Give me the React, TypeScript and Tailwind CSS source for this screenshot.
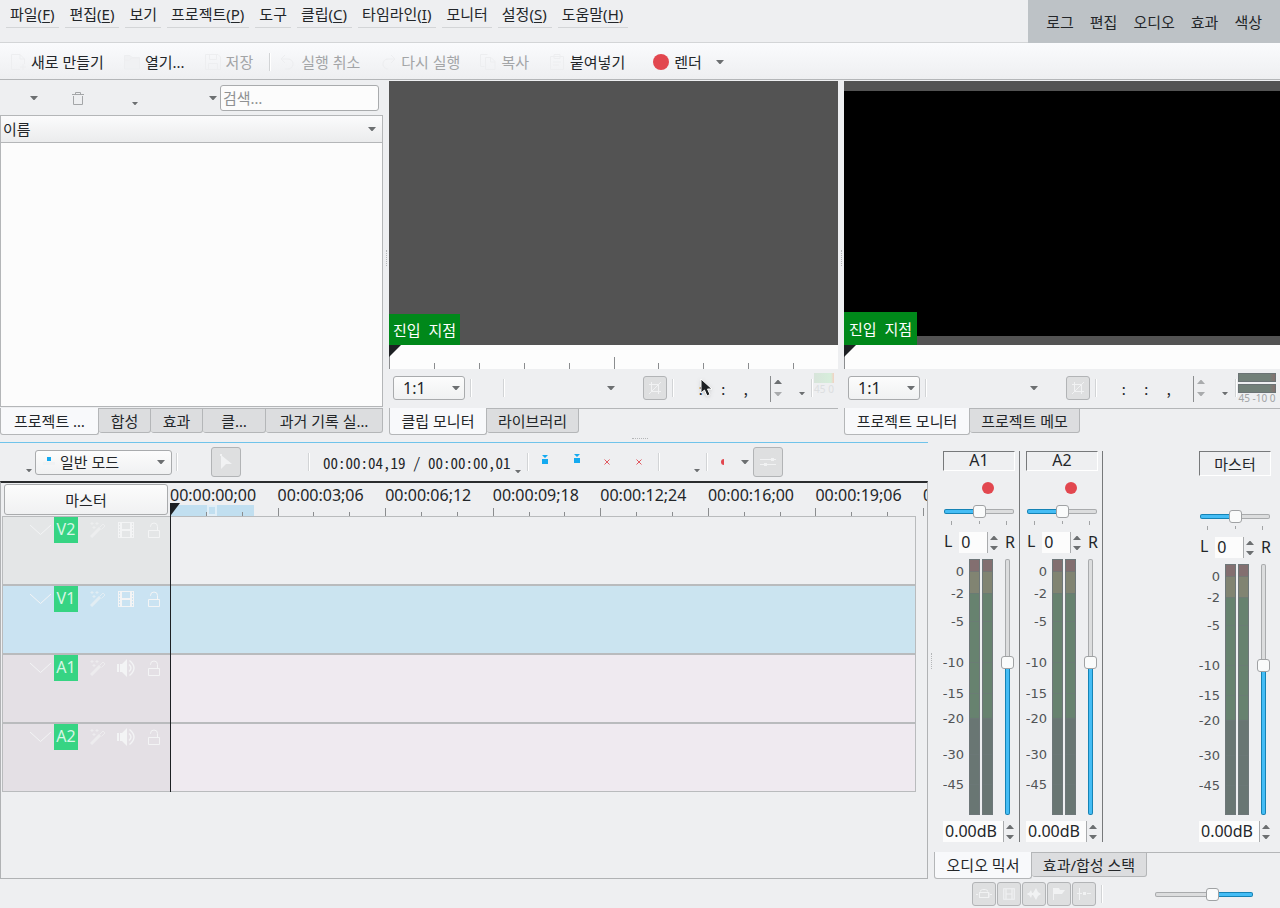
import React, { useState } from 'react'
import clsx from 'clsx'

const MENUS = [
  { label: '파일', hotkey: 'F' },
  { label: '편집', hotkey: 'E' },
  { label: '보기' },
  { label: '프로젝트', hotkey: 'P' },
  { label: '도구' },
  { label: '클립', hotkey: 'C' },
  { label: '타임라인', hotkey: 'I' },
  { label: '모니터' },
  { label: '설정', hotkey: 'S' },
  { label: '도움말', hotkey: 'H' },
]

const WORKSPACES = ['로그', '편집', '오디오', '효과', '색상']

const TIMECODES = [
  '00:00:00;00',
  '00:00:03;06',
  '00:00:06;12',
  '00:00:09;18',
  '00:00:12;24',
  '00:00:16;00',
  '00:00:19;06',
]

const TRACKS = [
  { name: 'V2', head: 'bg-[#e4e6e7]', body: 'bg-[#eeeff1]', audio: false },
  { name: 'V1', head: 'bg-[#cae3f2]', body: 'bg-[#cbe4f0]', audio: false },
  { name: 'A1', head: 'bg-[#e4e0e5]', body: 'bg-[#efeaf0]', audio: true },
  { name: 'A2', head: 'bg-[#e4e0e5]', body: 'bg-[#efeaf0]', audio: true },
]

// dB mark -> position on the meter, 0 is the top
const SCALE = [
  { db: '0', pos: 0.047 },
  { db: '-2', pos: 0.133 },
  { db: '-5', pos: 0.243 },
  { db: '-10', pos: 0.402 },
  { db: '-15', pos: 0.523 },
  { db: '-20', pos: 0.621 },
  { db: '-30', pos: 0.762 },
  { db: '-45', pos: 0.879 },
]

const MONO = 'font-["Noto_Sans_Mono_CJK_KR","Noto_Sans_Mono","Liberation_Mono",monospace]'

const THUMB =
  '[&::-webkit-slider-thumb]:h-[13px] [&::-webkit-slider-thumb]:w-[13px] [&::-webkit-slider-thumb]:appearance-none [&::-webkit-slider-thumb]:rounded-[3px] [&::-webkit-slider-thumb]:border [&::-webkit-slider-thumb]:border-[#a0a2a4] [&::-webkit-slider-thumb]:bg-[#fafbfb]'

const H_SLIDER =
  'h-4 w-full appearance-none bg-transparent [&::-webkit-slider-runnable-track]:h-[5px] [&::-webkit-slider-runnable-track]:rounded-[2px] [&::-webkit-slider-runnable-track]:border [&::-webkit-slider-runnable-track]:border-transparent [&::-webkit-slider-thumb]:-mt-[5px]'

const V_SLIDER =
  'w-[13px] shrink-0 appearance-none bg-transparent [direction:rtl] [writing-mode:vertical-lr] [&::-webkit-slider-runnable-track]:h-full [&::-webkit-slider-runnable-track]:w-[5px] [&::-webkit-slider-runnable-track]:rounded-[2px] [&::-webkit-slider-runnable-track]:border [&::-webkit-slider-runnable-track]:border-transparent [&::-webkit-slider-thumb]:-ml-[5px]'

function Caret({ small, up, light }: { small?: boolean; up?: boolean; light?: boolean }) {
  return (
    <svg
      width={small ? 6 : 8}
      height={small ? 3 : 4}
      viewBox="0 0 8 4"
      className={clsx('shrink-0', up && 'rotate-180', light ? 'fill-[#a9abad]' : 'fill-[#6c6f71]')}
    >
      <path d="M0 0h8L4.500 4h-1z" />
    </svg>
  )
}

function Sep({ className }: { className?: string }) {
  return <span className={clsx('h-[18px] w-[2px] shrink-0 border-l border-[#d2d4d6] bg-white', className)} />
}

function Grip({ vertical }: { vertical?: boolean }) {
  return (
    <span
      className={clsx(
        'border-dotted border-[#b4b6b8]',
        vertical ? 'h-4 w-px border-l' : 'h-px w-4 border-t'
      )}
    />
  )
}

function FilmIcon() {
  return (
    <svg width="16" height="16" viewBox="0 0 16 16" fill="currentColor">
      <path
        fillRule="evenodd"
        d="M0 0h16v16H0zM4 1h8v6H4zM4 9h8v6H4zM1 1h1v2H1zM1 4h1v2H1zM1 7h1v2H1zM1 10h1v2H1zM1 13h1v2H1zM14 1h1v2h-1zM14 4h1v2h-1zM14 7h1v2h-1zM14 10h1v2h-1zM14 13h1v2h-1z"
      />
    </svg>
  )
}

function SpeakerIcon() {
  return (
    <svg width="18" height="18" viewBox="0 0 18 18" fill="none" stroke="currentColor">
      <path d="M0 5h2v8H0zM3 5h2l5-5v18l-5-5H3z" fill="currentColor" stroke="none" />
      <path d="M12 5.500q4 3.500 0 7M12.500 1.500q9 7.500 0 15" strokeWidth="1.400" />
    </svg>
  )
}

function LockIcon() {
  return (
    <svg width="12" height="16" viewBox="0 0 12 16" fill="none" stroke="currentColor">
      <path d="M.5 8.500h11v7H.5zM9.500 8V4.500a3.500 3.500 0 0 0-7 0V5" />
    </svg>
  )
}

function WandIcon() {
  return (
    <svg width="16" height="16" viewBox="0 0 16 16" fill="none" stroke="currentColor">
      <path d="M1 15L10 6" strokeWidth="3" />
      <path d="M9.500 5.500L13 2l2 2-3.500 3.500M2 0v3M.5 1.500h3M7 0v3M5.500 1.500h3M4 4v3M2.500 5.500h3" />
    </svg>
  )
}

function ToolIcon({ name }: { name: string }) {
  if (name === 'render') {
    return (
      <svg width="16" height="16" viewBox="0 0 16 16" fill="#e2474f">
        <circle cx="8" cy="8" r="8" />
      </svg>
    )
  }
  return (
    <svg width="16" height="16" viewBox="0 0 16 16" fill="none" stroke="#edeef0">
      {name === 'new' && <path d="M14.500 10V5L10 .5H1.500v15H10M10 .5V5h4.500M13 10v6M10 13h6" />}
      {name === 'open' && <path d="M.5 15V1.500H6l2 2h7.500V15zM.5 6h5l2-2h8" fill="#f0f1f3" />}
      {name === 'save' && <path d="M.5.5H13l2.500 2.500v12.500H.5zM4.500.5v5h7v-5M3.500 15V9.500h9V15" />}
      {name === 'undo' && <path d="M5 1L1 5l4 4M1 5h7a5 5 0 0 1 0 10H5" />}
      {name === 'redo' && <path d="M11 1l4 4-4 4M15 5H8a5 5 0 0 0 0 10" />}
      {name === 'copy' && <path d="M4.500 12.500h-4V.5h7M5.500 3.500H11l4 4v8H5.500zM10.500 3.500V8H15" />}
      {name === 'paste' && <path d="M1.500 2.500h13v13h-13zM5 .5h6v4H5zM4 8h8M4 11h6" />}
    </svg>
  )
}

function ToolAction({ icon, label, disabled }: { icon: string; label: string; disabled?: boolean }) {
  return (
    <button className="flex items-center gap-[5px] whitespace-nowrap disabled:text-[#a3a5a7]" disabled={disabled}>
      <ToolIcon name={icon} />
      {label}
    </button>
  )
}

function PressedButton({ label, className, children }: { label: string; className: string; children: React.ReactNode }) {
  return (
    <button
      aria-label={label}
      className={clsx(
        'flex shrink-0 items-center justify-center rounded-[3px] border border-[#b2b4b6] bg-[#dedfe0] text-[#f1f2f3]',
        className
      )}
    >
      {children}
    </button>
  )
}

function Tabs({ items, widths }: { items: string[]; widths: string[] }) {
  const [active, setActive] = useState(0)

  return (
    <div role="tablist" className="flex h-[27px] items-start">
      {items.map((item, i) => (
        <button
          key={item}
          role="tab"
          aria-selected={i === active}
          onClick={() => setActive(i)}
          className={clsx(
            'shrink-0 whitespace-nowrap rounded-b-[3px] border border-[#b4b6b8]',
            widths[i],
            i === active ? 'h-[27px] border-t-0 bg-[#f8f9fb]' : 'h-[25px] border-l-0 bg-[#dcdddf]'
          )}
        >
          {item}
        </button>
      ))}
      <span className="flex-1 border-t border-[#b4b6b8]" />
    </div>
  )
}

function ProjectBin() {
  return (
    <section className="flex min-w-0 flex-[383] flex-col">
      <div className="flex h-[34px] items-center pr-1">
        <button aria-label="클립 추가" className="ml-[30px]">
          <Caret />
        </button>
        <button aria-label="삭제" className="ml-[34px]">
          <svg width="12" height="13" viewBox="0 0 12 13" fill="none" stroke="#a4a6a8">
            <path d="M0 2.500h12M3.500 2V.5h5V2M1.500 4v8.500h9V4" />
          </svg>
        </button>
        <button aria-label="보기 옵션" className="ml-12 self-end pb-[10px]">
          <Caret small />
        </button>
        <button aria-label="필터" className="ml-auto mr-[3px]">
          <Caret />
        </button>
        <input
          aria-label="검색"
          placeholder="검색…"
          className="h-[26px] w-[159px] rounded-[3px] border border-[#a9abad] bg-[#fcfcfc] px-[2px] placeholder:text-[#8f9193]"
        />
      </div>
      <div className="mb-px h-[292px] border border-[#b4b6b8] bg-[#fcfcfc]">
        <button className="flex h-[27px] w-full items-center justify-between border-b border-[#b4b6b8] bg-linear-to-b from-[#fbfbfc] to-[#ebeced] pl-[2px] pr-[6px]">
          이름
          <Caret />
        </button>
      </div>
      <Tabs
        items={['프로젝트 …', '합성', '효과', '클…', '과거 기록 실…']}
        widths={['w-[99px]', 'w-[52px]', 'w-[52px]', 'w-[63px]', 'w-[117px]']}
      />
    </section>
  )
}

function CropIcon() {
  return (
    <svg width="12" height="12" viewBox="0 0 12 12" fill="none" stroke="currentColor">
      <path d="M2.500 0v9.500H12M0 2.500h9.500V12M0 12L12 0" />
    </svg>
  )
}

function MonitorBar({ project }: { project?: boolean }) {
  return (
    <div className="flex h-[39px] items-center pb-[2px]">
      <label className="relative ml-1 shrink-0">
        <select
          aria-label="확대 비율"
          className="h-[24px] w-[72px] appearance-none rounded-[3px] border border-[#a9abad] bg-linear-to-b from-[#fcfcfc] to-[#f0f1f2] pl-[9px] text-base leading-5"
        >
          <option>1:1</option>
        </select>
        <span className="pointer-events-none absolute right-[5px] top-[10px]">
          <Caret />
        </span>
      </label>
      <Sep className="ml-[5px]" />
      {!project && <Sep className="ml-[31px]" />}
      <button aria-label="재생 옵션" className="ml-auto">
        <Caret />
      </button>
      <PressedButton label="자르기" className="ml-7 h-[24px] w-[24px]">
        <CropIcon />
      </PressedButton>
      <Sep className="ml-[5px]" />
      <div className="relative pt-[2px]">
        <input
          aria-label="시간 코드"
          defaultValue="  :  :  ,  "
          className={clsx('ml-2 h-[26px] w-[89px] border-r border-[#8b8d8f] bg-transparent', MONO)}
        />
        {!project && (
          <svg
            width="14"
            height="20"
            viewBox="0 0 14 20"
            className="absolute left-[26px] top-1 drop-shadow"
            fill="#1d2023"
            stroke="#fff"
          >
            <path d="M1 1v14l3.500-3 2.500 6 3-1.500-2.500-5.500H12z" />
          </svg>
        )}
      </div>
      <div className="ml-[3px] flex flex-col gap-2 pt-px">
        <Caret up light={project} />
        <Caret light />
      </div>
      <button aria-label="시간 코드 형식" className="ml-[17px] self-end pb-[11px]">
        <Caret small />
      </button>
      <Sep className={project ? 'ml-[7px]' : 'ml-[6px]'} />
      {project ? (
        <div className="ml-px mr-1 w-[38px] self-start pt-1 text-center text-[10px] leading-[10px] text-[#a2a4a6]">
          <div className="mb-[2px] h-[9px] border border-[#6b7375] bg-linear-to-r from-[#728079] from-85% to-[#86706f]" />
          <div className="h-[9px] border border-[#6b7375] bg-linear-to-r from-[#728079] from-85% to-[#86706f]" />
          <p className="whitespace-nowrap">45 -10 0</p>
        </div>
      ) : (
        <div className="ml-px mr-1 w-[20px] self-start pt-1 text-center text-[10px] leading-[12px] text-[#dcdee0]">
          <div className="h-[10px] bg-linear-to-r from-[#d7e4da] via-[#d6eedb] via-85% to-[#f3cfc0]" />
          <p className="whitespace-nowrap">45 0</p>
        </div>
      )}
    </div>
  )
}

function Monitor({ project }: { project?: boolean }) {
  return (
    <section className={clsx('flex min-w-0 flex-col', project ? 'flex-[436]' : 'flex-[449]')}>
      <div className="relative h-[264px] bg-[#535353] pb-[9px] pt-[10px]">
        {project && <div className="h-full bg-black" />}
        <span
          className={clsx(
            'absolute bottom-0 left-0 flex items-center justify-center whitespace-pre bg-[#00881a] text-white',
            project ? 'h-[33px] w-[73px]' : 'h-[31px] w-[71px]'
          )}
        >
          {'진입  지점'}
        </span>
      </div>
      <div className="relative flex h-6 items-end bg-[#fdfdfd]">
        {project ? (
          <span className="h-full border-l border-[#8b8d8f]" />
        ) : (
          Array.from({ length: 10 }, (_, i) => (
            <span
              key={i}
              className={clsx('flex-1 border-l border-[#8b8d8f]', i === 0 ? 'h-full' : i === 5 ? 'h-3' : 'h-[6px]')}
            />
          ))
        )}
        <svg width="12" height="12" viewBox="0 0 12 12" className="absolute left-0 top-0 fill-[#1d2023]">
          <path d="M0 0h12L0 12z" />
        </svg>
      </div>
      <MonitorBar project={project} />
      {project ? (
        <Tabs items={['프로젝트 모니터', '프로젝트 메모']} widths={['w-[126px]', 'w-[110px]']} />
      ) : (
        <Tabs items={['클립 모니터', '라이브러리']} widths={['w-[98px]', 'w-[92px]']} />
      )}
    </section>
  )
}

function ZoneIcon() {
  return (
    <svg width="8" height="10" viewBox="0 0 8 10" fill="#14aaf0">
      <path d="M1 0h6L4 3zM1 4h6v5H1z" />
    </svg>
  )
}

function CrossIcon() {
  return (
    <svg width="6" height="6" viewBox="0 0 6 6" stroke="#e05a62">
      <path d="M.5.5l5 5M5.500.5l-5 5" />
    </svg>
  )
}

function TimelineBar() {
  return (
    <div className="flex h-[38px] items-center">
      <button aria-label="트랙 메뉴" className="ml-[26px] self-end pb-[9px]">
        <Caret small />
      </button>
      <label className="relative ml-[3px] shrink-0">
        <select
          aria-label="편집 모드"
          className="h-[25px] w-[137px] appearance-none rounded-[3px] border border-[#a9abad] bg-linear-to-b from-[#fcfcfc] to-[#f0f1f2] pl-6 leading-5"
        >
          <option>일반 모드</option>
        </select>
        <svg width="12" height="8" viewBox="0 0 12 8" className="pointer-events-none absolute left-2 top-[7px]">
          <path d="M4 0h4v4H4z" fill="#14aaf0" />
          <path d="M0 5h12v3H0z" fill="#f1f2f3" />
        </svg>
        <span className="pointer-events-none absolute right-[7px] top-[10px]">
          <Caret />
        </span>
      </label>
      <Sep className="ml-1" />
      <PressedButton label="선택 도구" className="ml-[33px] h-[30px] w-[30px]">
        <svg width="12" height="16" viewBox="0 0 12 16" fill="currentColor">
          <path d="M1 1l11 9H6l-5 5zM0 0h2v2H0z" />
        </svg>
      </PressedButton>
      <Sep className="ml-[67px]" />
      <span className={clsx('ml-[13px] shrink-0 whitespace-pre pt-[2px]', MONO)}>00:00:04,19 / 00:00:00,01</span>
      <button aria-label="시간 코드 형식" className="ml-1 self-end pb-2">
        <Caret small />
      </button>
      <Sep className="ml-[6px]" />
      <button aria-label="영역 삽입" className="ml-3 pb-1">
        <ZoneIcon />
      </button>
      <button aria-label="영역 덮어쓰기" className="ml-6 pb-[6px]">
        <ZoneIcon />
      </button>
      <button aria-label="영역 추출" className="ml-[23px]">
        <CrossIcon />
      </button>
      <button aria-label="영역 들어내기" className="ml-[26px]">
        <CrossIcon />
      </button>
      <Sep className="ml-4" />
      <button aria-label="미리보기 렌더" className="ml-[34px] self-end pb-[9px]">
        <Caret small />
      </button>
      <Sep className="ml-[6px]" />
      <svg width="4" height="6" viewBox="0 0 4 6" className="ml-3 shrink-0 fill-[#e2474f]">
        <path d="M4 0v6a3 3 0 0 1 0-6z" />
      </svg>
      <button aria-label="녹음 옵션" className="ml-[17px]">
        <Caret />
      </button>
      <PressedButton label="믹서 표시" className="ml-1 h-[30px] w-[30px]">
        <svg width="16" height="12" viewBox="0 0 16 12" fill="currentColor">
          <path d="M0 3h16v1H0zM11 2h3v3h-3zM0 8h16v1H0zM4 7h3v3H4z" />
        </svg>
      </PressedButton>
    </div>
  )
}

function Timeline() {
  return (
    <section className="flex min-w-0 flex-1 flex-col border-t border-[#6fc3ea]">
      <TimelineBar />
      <div className="mb-px flex-1 overflow-hidden border border-t-2 border-[#b0b2b4] border-t-[#2a2c2e]">
        <div className="flex h-[33px]">
          <div className="w-[169px] shrink-0 pl-[3px] pr-[2px] pt-px">
            <button className="h-[31px] w-full rounded-[3px] border border-[#a9abad] bg-linear-to-b from-[#fcfcfc] to-[#f0f1f2]">
              마스터
            </button>
          </div>
          <div className="relative flex min-w-0 flex-1 text-base">
            <div className="absolute bottom-0 left-0 flex h-[11px] w-[84px] justify-center bg-[#c1dff0]">
              <span className="w-[10px] border-2 border-[#e0eef7]" />
            </div>
            {TIMECODES.map((code) => (
              <div key={code} className="relative flex min-w-0 flex-1 flex-col justify-between">
                <span className="leading-6">{code}</span>
                <span className="grid h-2 grid-cols-3 items-end">
                  <i className="h-2 border-l border-[#8b8d8f]" />
                  <i className="h-1 border-l border-[#8b8d8f]" />
                  <i className="h-1 border-l border-[#8b8d8f]" />
                </span>
              </div>
            ))}
            <div className="flex w-1 flex-col justify-between overflow-hidden">
              <span className="leading-6">00:00:22;12</span>
              <i className="h-2 shrink-0 border-l border-[#8b8d8f]" />
            </div>
          </div>
        </div>
        <div className="relative ml-px mr-[11px]">
          {TRACKS.map((track) => (
            <div key={track.name} className="flex h-[69px] border border-[#b9bbbd]">
              <div
                className={clsx(
                  'flex w-[168px] shrink-0 items-start border-r border-[#b9bbbd] pl-[27px] text-[#f3f4f5]',
                  track.head
                )}
              >
                <button aria-label="트랙 접기" className="mt-2">
                  <svg width="21" height="10" viewBox="0 0 21 10" fill="none" stroke="currentColor">
                    <path d="M0 0l10.500 9.500L21 0" />
                  </svg>
                </button>
                <span className="ml-[3px] h-[26px] w-6 shrink-0 bg-[#36d483] text-center text-base leading-[25px] text-[#d8f6e6]">
                  {track.name}
                </span>
                <button aria-label="효과" className="ml-3 mt-[5px] opacity-60">
                  <WandIcon />
                </button>
                <button
                  aria-label={track.audio ? '음소거' : '숨기기'}
                  className={clsx('flex w-[18px] justify-center', track.audio ? 'ml-[11px] mt-1' : 'ml-[11px] mt-[5px]')}
                >
                  {track.audio ? <SpeakerIcon /> : <FilmIcon />}
                </button>
                <button aria-label="잠금" className="ml-[13px] mt-[5px]">
                  <LockIcon />
                </button>
              </div>
              <div className={clsx('flex-1', track.body)} />
            </div>
          ))}
          <div className="absolute -top-[13px] bottom-0 left-[168px] border-l border-[#1d2023]">
            <svg width="9" height="12" viewBox="0 0 9 12" className="fill-[#1d2023]">
              <path d="M0 0h9L0 12z" />
            </svg>
          </div>
        </div>
      </div>
    </section>
  )
}

function Meter({ height }: { height: number }) {
  return (
    <svg width="51" height={height} className="shrink-0 font-['DejaVu_Sans'] text-[13px]">
      {SCALE.map(({ db, pos }) => (
        <text key={db} x="21" y={Math.round(height * pos) + 5} textAnchor="end" fill="#515456">
          {db}
        </text>
      ))}
      {[26, 39].map((x) => (
        <g key={x}>
          <rect x={x} width="11" height={height} fill="#697673" />
          <rect x={x} width="11" height={height * 0.621} fill="#67826f" />
          <rect x={x} width="11" height={height * 0.133} fill="#818472" />
          <rect x={x} width="11" height={height * 0.05} fill="#836f70" />
          {SCALE.map(({ db, pos }) => (
            <rect key={db} x={x} y={Math.round(height * pos)} width="11" height="1" fill="#6c7878" opacity="0.6" />
          ))}
          <rect x={x + 0.5} y="0.5" width="10" height={height - 1} fill="none" stroke="#6e7779" />
        </g>
      ))}
    </svg>
  )
}

function Spin({ label, value, className }: { label: string; value: string; className: string }) {
  return (
    <span className="flex h-[21px] items-center">
      <input
        aria-label={label}
        defaultValue={value}
        className={clsx('h-[21px] border-r border-[#a9abad] bg-[#fcfcfc] pb-[2px] pl-[2px] text-base', className)}
      />
      <span className="ml-[2px] flex flex-col gap-[6px]">
        <Caret up />
        <Caret />
      </span>
    </span>
  )
}

function Strip({ name, master }: { name: string; master?: boolean }) {
  return (
    <div className={clsx('flex flex-col', master ? 'ml-auto w-[72px]' : 'w-[77px] border-r border-[#77797b] pr-1')}>
      <h2
        className={clsx(
          'border border-b-white border-l-[#77797b] border-r-white border-t-[#77797b] text-center',
          master ? 'h-[25px] leading-[24px]' : 'h-[20px] text-base leading-[17px]'
        )}
      >
        {name}
      </h2>
      <div className="flex h-8 items-center pl-[39px] pt-px">
        {!master && (
          <button aria-label={`${name} 녹음`} className="h-3 w-3 rounded-full bg-[#e2474f]" />
        )}
      </div>
      <div className="flex px-px">
        <input
          type="range"
          aria-label={`${name} 균형`}
          defaultValue={50}
          className={clsx(
            H_SLIDER,
            THUMB,
            '[&::-webkit-slider-runnable-track]:[background:linear-gradient(to_right,#45bdf5_50%,#dcddde_50%)_padding-box,linear-gradient(to_right,#1583b5_50%,#a9abad_50%)_border-box]'
          )}
        />
      </div>
      <div className="mt-[2px] flex h-1 justify-between px-2">
        <i className="h-1 border-l border-[#a2a4a6]" />
        <i className="h-[3px] border-l border-[#a2a4a6]" />
        <i className="h-1 border-l border-[#a2a4a6]" />
      </div>
      <div className="mt-[7px] flex h-[21px] items-center justify-between text-base">
        <span className="pb-1 pl-px">L</span>
        <Spin label={`${name} 균형 값`} value="0" className="w-[29px]" />
        <span className="pb-[2px]">R</span>
      </div>
      <div className="mt-[6px] flex">
        <Meter height={master ? 251 : 256} />
        <input
          type="range"
          aria-label={`${name} 음량`}
          defaultValue={60}
          className={clsx(
            'ml-[7px]',
            V_SLIDER,
            THUMB,
            '[&::-webkit-slider-runnable-track]:[background:linear-gradient(to_top,#45bdf5_60%,#dcddde_60%)_padding-box,linear-gradient(to_top,#1583b5_60%,#a9abad_60%)_border-box]'
          )}
        />
      </div>
      <div className="mt-[6px]">
        <Spin label={`${name} 음량 값`} value="0.00dB" className="w-[61px]" />
      </div>
    </div>
  )
}

function Mixer() {
  return (
    <section className="mb-px flex w-[346px] shrink-0 flex-col">
      <div className="flex flex-1 items-start gap-[6px] px-[9px] pt-[9px]">
        <Strip name="A1" />
        <Strip name="A2" />
        <Strip name="마스터" master />
      </div>
      <Tabs items={['오디오 믹서', '효과/합성 스택']} widths={['w-[98px]', 'w-[115px]']} />
    </section>
  )
}

function StatusBar() {
  return (
    <footer className="flex h-[28px] items-center justify-end gap-px pr-[27px]">
      <PressedButton label="비디오 썸네일" className="h-6 w-6">
        <svg width="16" height="12" viewBox="0 0 16 12" fill="none" stroke="currentColor">
          <path d="M4.500 3.500v-1l2-1h3l2 1v1M3 4.500h10v5H3M3.500 4.500v5M12.500 4.500v5M0 6.500h2M14 6.500h2" />
        </svg>
      </PressedButton>
      <PressedButton label="필름 표시" className="h-6 w-6">
        <svg width="12" height="12" viewBox="0 0 16 16" fill="none" stroke="currentColor" strokeWidth="1.500">
          <path d="M1 1h14v14H1zM4 1v14M12 1v14M4 8h8" />
        </svg>
      </PressedButton>
      <PressedButton label="오디오 파형" className="h-6 w-6">
        <svg width="14" height="12" viewBox="0 0 14 12" fill="currentColor">
          <path d="M0 6l1-1h1l2-3 1 3h1l3-5 2 4 3 2-3 2-2 4-3-5H5l-1 3-2-3H1z" />
        </svg>
      </PressedButton>
      <PressedButton label="마커 표시" className="h-6 w-6">
        <svg width="12" height="12" viewBox="0 0 12 12" fill="currentColor">
          <path d="M0 0h6l1 2h5L9 6H1v6H0z" />
        </svg>
      </PressedButton>
      <PressedButton label="맞추기" className="h-6 w-6">
        <svg width="14" height="12" viewBox="0 0 14 12" fill="currentColor">
          <path d="M2 0h1v12H2zM0 5h5v1H0zM6 4h3v3H6zM10 5h4v1h-4z" />
        </svg>
      </PressedButton>
      <Sep className="ml-1 mr-[51px] h-3" />
      <div className="flex w-[98px]">
        <input
          type="range"
          aria-label="타임라인 확대"
          defaultValue={60}
          className={clsx(
            H_SLIDER,
            THUMB,
            '[&::-webkit-slider-runnable-track]:[background:linear-gradient(to_right,#dcddde_60%,#45bdf5_60%)_padding-box,linear-gradient(to_right,#a9abad_60%,#1583b5_60%)_border-box]'
          )}
        />
      </div>
    </footer>
  )
}

export default function App() {
  return (
    <div className='flex min-h-screen flex-col overflow-hidden bg-[#eeeff1] font-["Noto_Sans","Noto_Sans_CJK_KR",sans-serif] text-[15px] leading-5 text-[#232629]'>
      <header className="flex h-[43px] justify-between border-b border-[#d3d5d7]">
        <nav className="flex items-start gap-[6px] pl-[6px]">
          {MENUS.map((menu) => (
            <button
              key={menu.label}
              className={clsx(
                'h-7 whitespace-nowrap border-b border-[#d3d5d7] pl-1',
                menu.hotkey ? 'pr-[5px]' : 'pr-1'
              )}
            >
              {menu.label}
              {menu.hotkey && (
                <>
                  (<u className="underline-offset-2">{menu.hotkey}</u>)
                </>
              )}
            </button>
          ))}
        </nav>
        <nav className="-mb-px flex shrink-0 items-center gap-4 bg-[#bdc2c6] px-[18px]">
          {WORKSPACES.map((name) => (
            <button key={name}>{name}</button>
          ))}
        </nav>
      </header>

      <div className="flex h-[37px] items-center gap-5 border-b border-[#b4b6b8] bg-linear-to-b from-[#fafbfd] to-[#eeeff1] pl-[10px] pt-[2px]">
        <ToolAction icon="new" label="새로 만들기" />
        <ToolAction icon="open" label="열기..." />
        <ToolAction icon="save" label="저장" disabled />
        <Sep className="-mx-1" />
        <div className="-ml-[7px] flex items-center gap-5">
          <ToolAction icon="undo" label="실행 취소" disabled />
          <ToolAction icon="redo" label="다시 실행" disabled />
          <ToolAction icon="copy" label="복사" disabled />
          <ToolAction icon="paste" label="붙여넣기" />
        </div>
        <div className="ml-2 flex items-center gap-[14px]">
          <ToolAction icon="render" label="렌더" />
          <button aria-label="렌더 옵션">
            <Caret />
          </button>
        </div>
      </div>

      <div className="flex pt-px">
        <ProjectBin />
        <div className="flex w-[6px] items-center justify-center">
          <Grip vertical />
        </div>
        <Monitor />
        <div className="flex w-[6px] items-center justify-center">
          <Grip vertical />
        </div>
        <Monitor project />
      </div>

      <div className="flex h-[7px] items-center justify-center">
        <Grip />
      </div>

      <div className="flex flex-1">
        <Timeline />
        <div className="flex w-[6px] items-center justify-center">
          <Grip vertical />
        </div>
        <Mixer />
      </div>

      <StatusBar />
    </div>
  )
}
